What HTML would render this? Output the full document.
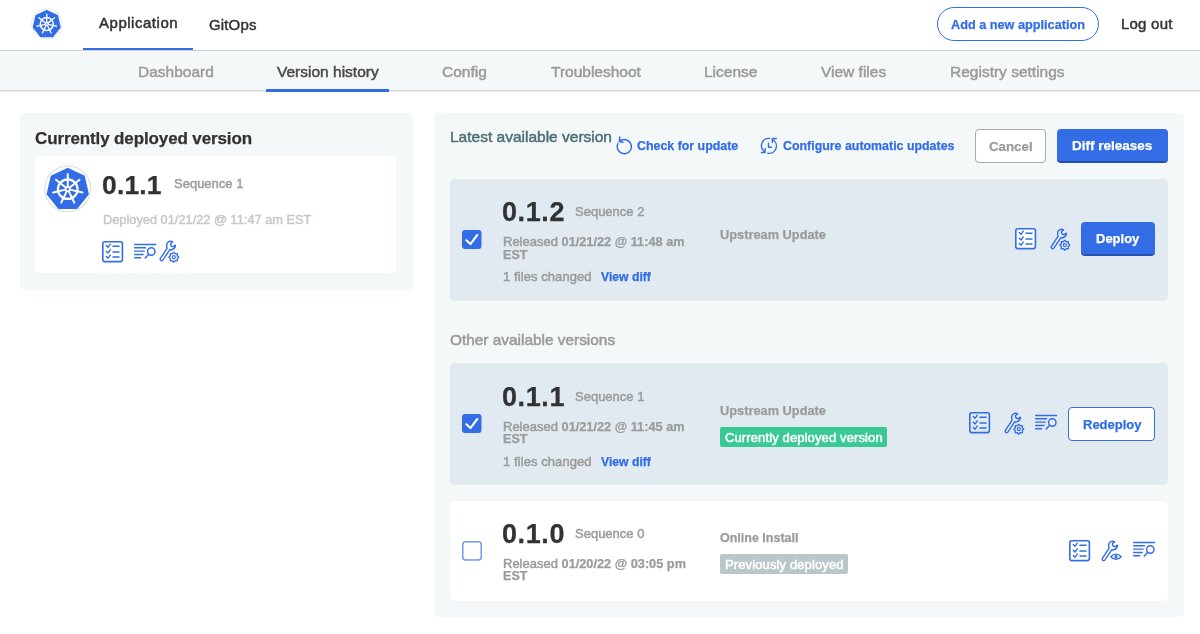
<!DOCTYPE html>
<html><head><meta charset="utf-8">
<style>
*{box-sizing:border-box;margin:0;padding:0}
html,body{width:1200px;height:634px;overflow:hidden;background:#fff;font-family:"Liberation Sans",sans-serif;-webkit-font-smoothing:antialiased}
.a{position:absolute;white-space:nowrap;line-height:1;will-change:transform}
svg{position:absolute;overflow:visible}
</style></head><body>
<div style="position:absolute;left:0px;top:0px;width:1200px;height:51px;background:#fff;border-bottom:1px solid #cfd2d3"></div>
<svg style="left:30.5px;top:8px" width="31.5" height="31.5" viewBox="0 0 48 48"><circle cx="24" cy="24" r="23.2" fill="#fff" stroke="#e2e2e2" stroke-width="1.3"/><polygon points="24.00,4.10 40.11,11.86 44.08,29.28 32.94,43.26 15.06,43.26 3.92,29.28 7.89,11.86" fill="#326de6" stroke="#326de6" stroke-width="2.5" stroke-linejoin="round"/><circle cx="24" cy="24.4" r="9.9" fill="none" stroke="#fff" stroke-width="2.3"/><g stroke="#fff" stroke-width="2.0" stroke-linecap="round"><line x1="24.00" y1="22.20" x2="24.00" y2="9.20"/><line x1="25.72" y1="23.03" x2="35.88" y2="14.92"/><line x1="26.14" y1="24.89" x2="38.82" y2="27.78"/><line x1="24.95" y1="26.38" x2="30.60" y2="38.09"/><line x1="23.05" y1="26.38" x2="17.40" y2="38.09"/><line x1="21.86" y1="24.89" x2="9.18" y2="27.78"/><line x1="22.28" y1="23.03" x2="12.12" y2="14.92"/></g><circle cx="24" cy="24.4" r="2.9" fill="#fff"/><circle cx="24" cy="24.4" r="1.2" fill="#326de6"/></svg>
<div class="a" style="left:99px;top:15.2px;font-size:15px;font-weight:400;color:#323232;-webkit-text-stroke:0.5px #323232;letter-spacing:0.52px">Application</div>
<div style="position:absolute;left:83px;top:48px;width:110px;height:2px;background:#326de6"></div>
<div class="a" style="left:209px;top:16.8px;font-size:15px;font-weight:400;color:#323232;-webkit-text-stroke:0.45px #323232;letter-spacing:0.15px">GitOps</div>
<div style="position:absolute;left:937px;top:7px;width:162px;height:34px;border:1px solid #326de6;border-radius:17px"></div>
<div class="a" style="left:951px;top:19px;font-size:12.7px;font-weight:700;color:#326de6;-webkit-text-stroke:0.25px #326de6;">Add a new application</div>
<div class="a" style="left:1121px;top:16.3px;font-size:15px;font-weight:400;color:#323232;-webkit-text-stroke:0.45px #323232;letter-spacing:0.22px">Log out</div>
<div style="position:absolute;left:0px;top:51px;width:1200px;height:40px;background:#f5f8f9;border-bottom:1px solid #d3d6d7;box-shadow:0 1px 0 #e6e9ea"></div>
<div class="a" style="left:138px;top:63.8px;font-size:15.5px;font-weight:400;color:#9b9b9b;-webkit-text-stroke:0.5px #9b9b9b;">Dashboard</div>
<div class="a" style="left:442px;top:63.8px;font-size:15.5px;font-weight:400;color:#9b9b9b;-webkit-text-stroke:0.5px #9b9b9b;">Config</div>
<div class="a" style="left:551px;top:63.8px;font-size:15.5px;font-weight:400;color:#9b9b9b;-webkit-text-stroke:0.5px #9b9b9b;">Troubleshoot</div>
<div class="a" style="left:704px;top:63.8px;font-size:15.5px;font-weight:400;color:#9b9b9b;-webkit-text-stroke:0.5px #9b9b9b;">License</div>
<div class="a" style="left:821px;top:63.8px;font-size:15.5px;font-weight:400;color:#9b9b9b;-webkit-text-stroke:0.5px #9b9b9b;">View files</div>
<div class="a" style="left:950px;top:63.8px;font-size:15.5px;font-weight:400;color:#9b9b9b;-webkit-text-stroke:0.5px #9b9b9b;">Registry settings</div>
<div class="a" style="left:277px;top:63.8px;font-size:15.5px;font-weight:400;color:#4a4a4a;-webkit-text-stroke:0.5px #4a4a4a;">Version history</div>
<div style="position:absolute;left:266px;top:89px;width:123px;height:2.6px;background:#326de6"></div>
<div style="position:absolute;left:19.6px;top:112.6px;width:393.2px;height:177.1px;background:#f5f8f9;border-radius:5px"></div>
<div class="a" style="left:35px;top:129.8px;font-size:17px;font-weight:700;color:#323232;-webkit-text-stroke:0.25px #323232;letter-spacing:-0.12px">Currently deployed version</div>
<div style="position:absolute;left:35.3px;top:156px;width:361px;height:117.4px;background:#fff;border-radius:5px"></div>
<svg style="left:44px;top:164.5px" width="47.5" height="47.5" viewBox="0 0 48 48"><circle cx="24" cy="24" r="23.2" fill="#fff" stroke="#e2e2e2" stroke-width="1.3"/><polygon points="24.00,4.10 40.11,11.86 44.08,29.28 32.94,43.26 15.06,43.26 3.92,29.28 7.89,11.86" fill="#326de6" stroke="#326de6" stroke-width="2.5" stroke-linejoin="round"/><circle cx="24" cy="24.4" r="9.9" fill="none" stroke="#fff" stroke-width="2.3"/><g stroke="#fff" stroke-width="2.0" stroke-linecap="round"><line x1="24.00" y1="22.20" x2="24.00" y2="9.20"/><line x1="25.72" y1="23.03" x2="35.88" y2="14.92"/><line x1="26.14" y1="24.89" x2="38.82" y2="27.78"/><line x1="24.95" y1="26.38" x2="30.60" y2="38.09"/><line x1="23.05" y1="26.38" x2="17.40" y2="38.09"/><line x1="21.86" y1="24.89" x2="9.18" y2="27.78"/><line x1="22.28" y1="23.03" x2="12.12" y2="14.92"/></g><circle cx="24" cy="24.4" r="2.9" fill="#fff"/><circle cx="24" cy="24.4" r="1.2" fill="#326de6"/></svg>
<div class="a" style="left:101.5px;top:171.8px;font-size:26.5px;font-weight:700;color:#323232;-webkit-text-stroke:0.25px #323232;letter-spacing:0.15px">0.1.1</div>
<div class="a" style="left:174px;top:177.3px;font-size:13px;font-weight:400;color:#9b9b9b;-webkit-text-stroke:0.45px #9b9b9b;">Sequence 1</div>
<div class="a" style="left:102.5px;top:213.7px;font-size:12.8px;font-weight:400;color:#c4c8ca;-webkit-text-stroke:0.45px #c4c8ca;">Deployed 01/21/22 @ 11:47 am EST</div>
<svg style="left:101.5px;top:240.5px" width="22" height="22" viewBox="0 0 22 22" fill="none" stroke="#326de6" stroke-linecap="round" stroke-linejoin="round"><rect x="0.8" y="0.8" width="19.6" height="19.8" rx="2" stroke-width="1.6" fill="none"/><path d="M4.3 4.6000000000000005 L6.0 6.300000000000001 L8.3 3.2" stroke-width="1.4"/><path d="M11.0 5.2 L17.0 5.2" stroke-width="1.5"/><path d="M4.3 10.3 L6.0 12.0 L8.3 8.9" stroke-width="1.4"/><path d="M11.0 10.9 L17.0 10.9" stroke-width="1.5"/><path d="M4.3 15.500000000000002 L6.0 17.200000000000003 L8.3 14.100000000000001" stroke-width="1.4"/><path d="M11.0 16.1 L17.0 16.1" stroke-width="1.5"/></svg>
<svg style="left:134px;top:243.8px" width="23" height="16" viewBox="0 0 23 16" fill="none" stroke="#326de6" stroke-width="1.45" stroke-linecap="round"><path d="M0.7 0.5 H21.6"/><path d="M0.7 3.8 H11.5"/><path d="M0.7 7.1 H10.2"/><path d="M0.7 10.4 H9.1"/><path d="M0.7 13.7 H6.6"/><circle cx="17.3" cy="7.5" r="3.7"/><path d="M14.6 10.3 L11.2 13.9" stroke-linecap="round"/></svg>
<svg style="left:155px;top:237px" width="26" height="28" viewBox="0 0 26 28" fill="none" stroke="#326de6" stroke-width="1.4" stroke-linejoin="round"><path d="M17.6 4.9 C15.8 3.6 12.9 4.2 12.0 6.6 C11.5 8.0 11.6 9.9 12.13 11.2 L5.43 21.4 A1.5 1.5 0 0 0 7.97 23.0 L14.67 12.8 C16.8 13.2 19.4 12.1 20.3 9.6 C20.5 9.0 20.5 8.6 20.4 8.2 L18.6 9.3 C17.4 9.9 15.9 9.3 15.6 8.0 C15.3 6.8 16.0 5.8 17.0 5.4 Z"/><polygon points="23.70,20.20 23.61,20.52 23.36,20.80 23.02,21.04 22.66,21.24 22.38,21.42 22.22,21.62 22.19,21.87 22.26,22.20 22.38,22.59 22.45,23.00 22.42,23.38 22.26,23.66 21.98,23.82 21.60,23.85 21.19,23.78 20.80,23.66 20.47,23.59 20.22,23.62 20.02,23.78 19.84,24.06 19.64,24.42 19.40,24.76 19.12,25.01 18.80,25.10 18.48,25.01 18.20,24.76 17.96,24.42 17.76,24.06 17.58,23.78 17.38,23.62 17.13,23.59 16.80,23.66 16.41,23.78 16.00,23.85 15.62,23.82 15.34,23.66 15.18,23.38 15.15,23.00 15.22,22.59 15.34,22.20 15.41,21.87 15.38,21.62 15.22,21.42 14.94,21.24 14.58,21.04 14.24,20.80 13.99,20.52 13.90,20.20 13.99,19.88 14.24,19.60 14.58,19.36 14.94,19.16 15.22,18.98 15.38,18.78 15.41,18.53 15.34,18.20 15.22,17.81 15.15,17.40 15.18,17.02 15.34,16.74 15.62,16.58 16.00,16.55 16.41,16.62 16.80,16.74 17.13,16.81 17.38,16.78 17.58,16.62 17.76,16.34 17.96,15.98 18.20,15.64 18.48,15.39 18.80,15.30 19.12,15.39 19.40,15.64 19.64,15.98 19.84,16.34 20.02,16.62 20.22,16.78 20.47,16.81 20.80,16.74 21.19,16.62 21.60,16.55 21.98,16.58 22.26,16.74 22.42,17.02 22.45,17.40 22.38,17.81 22.26,18.20 22.19,18.53 22.22,18.78 22.38,18.98 22.66,19.16 23.02,19.36 23.36,19.60 23.61,19.88" fill="none" stroke-width="1.3"/><circle cx="18.8" cy="20.2" r="1.5" stroke-width="1.2"/></svg>
<div style="position:absolute;left:434px;top:112.6px;width:750px;height:504px;background:#f5f8f9;border-radius:5px"></div>
<div class="a" style="left:450px;top:128.7px;font-size:15.5px;font-weight:400;color:#4f6f78;-webkit-text-stroke:0.5px #4f6f78;">Latest available version</div>
<svg style="left:612px;top:134px" width="24" height="24" viewBox="0 0 24 24" fill="none" stroke="#326de6" stroke-width="1.4" stroke-linecap="round" stroke-linejoin="round"><path d="M7.49 7.38 A7.1 7.1 0 1 1 5.92 9.49"/><path d="M7.8 3.4 L7.4 7.5 L10.9 8.3" stroke-width="1.6"/></svg>
<div class="a" style="left:637px;top:140.4px;font-size:12.4px;font-weight:700;color:#326de6;-webkit-text-stroke:0.25px #326de6;">Check for update</div>
<svg style="left:756px;top:134px" width="24" height="24" viewBox="0 0 24 24" fill="none" stroke="#326de6" stroke-width="1.4" stroke-linecap="round" stroke-linejoin="round"><path d="M13.6 4.4 A7.3 7.3 0 0 0 8.6 17.6"/><path d="M9.1 14.5 L9.1 18.5 L5.4 18.5"/><path d="M11.8 19.2 A7.3 7.3 0 0 0 16.6 5.6"/><path d="M16.4 8.6 L16.4 4.5 L20.4 4.5"/><path d="M12.5 9.3 L12.5 13.3 L15.4 13.3"/></svg>
<div class="a" style="left:782.5px;top:140.4px;font-size:12.4px;font-weight:700;color:#326de6;-webkit-text-stroke:0.25px #326de6;">Configure automatic updates</div>
<div style="position:absolute;left:975px;top:128.5px;width:71px;height:34px;background:#fff;border:1px solid #a8a8a8;border-radius:4px"></div>
<div class="a" style="left:988.5px;top:140px;font-size:13.3px;font-weight:700;color:#9b9b9b;-webkit-text-stroke:0.25px #9b9b9b;">Cancel</div>
<div style="position:absolute;left:1057px;top:128.5px;width:111px;height:34px;background:#326de6;border-bottom:2px solid #2451b3;border-radius:4px"></div>
<div class="a" style="left:1072px;top:139px;font-size:13.5px;font-weight:700;color:#fff;-webkit-text-stroke:0.25px #fff;">Diff releases</div>
<div style="position:absolute;left:450px;top:178.8px;width:718px;height:122px;background:#e0eaf0;border-radius:5px"></div>
<svg style="left:462.3px;top:230px" width="20" height="20" viewBox="0 0 20 20"><rect x="0" y="0" width="19.5" height="19.1" rx="3" fill="#326de6"/><path d="M4.3 10.3 L8.4 14.1 L15.3 5.0" fill="none" stroke="#fff" stroke-width="2.1" stroke-linecap="round" stroke-linejoin="round"/></svg>
<div class="a" style="left:502px;top:198.8px;font-size:27px;font-weight:700;color:#323232;-webkit-text-stroke:0.25px #323232;letter-spacing:0.6px">0.1.2</div>
<div class="a" style="left:575px;top:204.6px;font-size:13px;font-weight:400;color:#9b9b9b;-webkit-text-stroke:0.45px #9b9b9b;">Sequence 2</div>
<div class="a" style="left:502.5px;top:234.8px;font-size:13px;font-weight:400;color:#9b9b9b;"><span style="font-size:13px;-webkit-text-stroke:0.5px #9b9b9b">Released </span><b style="font-size:12.75px;-webkit-text-stroke:0.25px #9b9b9b">01/21/22 @ 11:48 am</b></div>
<div class="a" style="left:502.5px;top:248.7px;font-size:12.6px;font-weight:700;color:#9b9b9b;-webkit-text-stroke:0.25px #9b9b9b;">EST</div>
<div class="a" style="left:502.5px;top:269.8px;font-size:13px;font-weight:400;color:#9b9b9b;-webkit-text-stroke:0.5px #9b9b9b;letter-spacing:0.08px">1 files changed</div>
<div class="a" style="left:600.5px;top:270.8px;font-size:12.2px;font-weight:700;color:#326de6;-webkit-text-stroke:0.25px #326de6;">View diff</div>
<div class="a" style="left:720px;top:229px;font-size:12.8px;font-weight:700;color:#9b9b9b;-webkit-text-stroke:0.25px #9b9b9b;">Upstream Update</div>
<svg style="left:1014.5px;top:227.7px" width="22" height="22" viewBox="0 0 22 22" fill="none" stroke="#326de6" stroke-linecap="round" stroke-linejoin="round"><rect x="0.8" y="0.8" width="19.6" height="19.8" rx="2" stroke-width="1.6" fill="#fff"/><path d="M4.3 4.6000000000000005 L6.0 6.300000000000001 L8.3 3.2" stroke-width="1.4"/><path d="M11.0 5.2 L17.0 5.2" stroke-width="1.5"/><path d="M4.3 10.3 L6.0 12.0 L8.3 8.9" stroke-width="1.4"/><path d="M11.0 10.9 L17.0 10.9" stroke-width="1.5"/><path d="M4.3 15.500000000000002 L6.0 17.200000000000003 L8.3 14.100000000000001" stroke-width="1.4"/><path d="M11.0 16.1 L17.0 16.1" stroke-width="1.5"/></svg>
<svg style="left:1045.5px;top:225.2px" width="26" height="28" viewBox="0 0 26 28" fill="none" stroke="#326de6" stroke-width="1.4" stroke-linejoin="round"><path d="M17.6 4.9 C15.8 3.6 12.9 4.2 12.0 6.6 C11.5 8.0 11.6 9.9 12.13 11.2 L5.43 21.4 A1.5 1.5 0 0 0 7.97 23.0 L14.67 12.8 C16.8 13.2 19.4 12.1 20.3 9.6 C20.5 9.0 20.5 8.6 20.4 8.2 L18.6 9.3 C17.4 9.9 15.9 9.3 15.6 8.0 C15.3 6.8 16.0 5.8 17.0 5.4 Z"/><polygon points="23.70,20.20 23.61,20.52 23.36,20.80 23.02,21.04 22.66,21.24 22.38,21.42 22.22,21.62 22.19,21.87 22.26,22.20 22.38,22.59 22.45,23.00 22.42,23.38 22.26,23.66 21.98,23.82 21.60,23.85 21.19,23.78 20.80,23.66 20.47,23.59 20.22,23.62 20.02,23.78 19.84,24.06 19.64,24.42 19.40,24.76 19.12,25.01 18.80,25.10 18.48,25.01 18.20,24.76 17.96,24.42 17.76,24.06 17.58,23.78 17.38,23.62 17.13,23.59 16.80,23.66 16.41,23.78 16.00,23.85 15.62,23.82 15.34,23.66 15.18,23.38 15.15,23.00 15.22,22.59 15.34,22.20 15.41,21.87 15.38,21.62 15.22,21.42 14.94,21.24 14.58,21.04 14.24,20.80 13.99,20.52 13.90,20.20 13.99,19.88 14.24,19.60 14.58,19.36 14.94,19.16 15.22,18.98 15.38,18.78 15.41,18.53 15.34,18.20 15.22,17.81 15.15,17.40 15.18,17.02 15.34,16.74 15.62,16.58 16.00,16.55 16.41,16.62 16.80,16.74 17.13,16.81 17.38,16.78 17.58,16.62 17.76,16.34 17.96,15.98 18.20,15.64 18.48,15.39 18.80,15.30 19.12,15.39 19.40,15.64 19.64,15.98 19.84,16.34 20.02,16.62 20.22,16.78 20.47,16.81 20.80,16.74 21.19,16.62 21.60,16.55 21.98,16.58 22.26,16.74 22.42,17.02 22.45,17.40 22.38,17.81 22.26,18.20 22.19,18.53 22.22,18.78 22.38,18.98 22.66,19.16 23.02,19.36 23.36,19.60 23.61,19.88" fill="none" stroke-width="1.3"/><circle cx="18.8" cy="20.2" r="1.5" stroke-width="1.2"/></svg>
<div style="position:absolute;left:1081px;top:222.4px;width:74px;height:34px;background:#326de6;border-bottom:2px solid #2451b3;border-radius:4px"></div>
<div class="a" style="left:1096px;top:232.0px;font-size:13px;font-weight:700;color:#fff;-webkit-text-stroke:0.25px #fff;">Deploy</div>
<div class="a" style="left:450px;top:332.2px;font-size:15.4px;font-weight:400;color:#9b9b9b;-webkit-text-stroke:0.55px #9b9b9b;">Other available versions</div>
<div style="position:absolute;left:450px;top:363px;width:718px;height:122px;background:#e0eaf0;border-radius:5px"></div>
<svg style="left:462.3px;top:414px" width="20" height="20" viewBox="0 0 20 20"><rect x="0" y="0" width="19.5" height="19.1" rx="3" fill="#326de6"/><path d="M4.3 10.3 L8.4 14.1 L15.3 5.0" fill="none" stroke="#fff" stroke-width="2.1" stroke-linecap="round" stroke-linejoin="round"/></svg>
<div class="a" style="left:502px;top:383.5px;font-size:27px;font-weight:700;color:#323232;-webkit-text-stroke:0.25px #323232;letter-spacing:0.6px">0.1.1</div>
<div class="a" style="left:575px;top:389.8px;font-size:13px;font-weight:400;color:#9b9b9b;-webkit-text-stroke:0.45px #9b9b9b;">Sequence 1</div>
<div class="a" style="left:502.5px;top:419.7px;font-size:13px;font-weight:400;color:#9b9b9b;"><span style="font-size:13px;-webkit-text-stroke:0.5px #9b9b9b">Released </span><b style="font-size:12.75px;-webkit-text-stroke:0.25px #9b9b9b">01/21/22 @ 11:45 am</b></div>
<div class="a" style="left:502.5px;top:432.6px;font-size:12.6px;font-weight:700;color:#9b9b9b;-webkit-text-stroke:0.25px #9b9b9b;">EST</div>
<div class="a" style="left:502.5px;top:455.3px;font-size:13px;font-weight:400;color:#9b9b9b;-webkit-text-stroke:0.5px #9b9b9b;letter-spacing:0.08px">1 files changed</div>
<div class="a" style="left:600.5px;top:456.3px;font-size:12.2px;font-weight:700;color:#326de6;-webkit-text-stroke:0.25px #326de6;">View diff</div>
<div class="a" style="left:720px;top:404.8px;font-size:12.8px;font-weight:700;color:#9b9b9b;-webkit-text-stroke:0.25px #9b9b9b;">Upstream Update</div>
<div style="position:absolute;left:720px;top:427px;width:167px;height:20px;background:#38c995;border-radius:2px"></div>
<div class="a" style="left:724.5px;top:430.7px;font-size:13px;font-weight:400;color:#fff;-webkit-text-stroke:0.5px #fff;letter-spacing:0.12px">Currently deployed version</div>
<svg style="left:968.5px;top:412px" width="22" height="22" viewBox="0 0 22 22" fill="none" stroke="#326de6" stroke-linecap="round" stroke-linejoin="round"><rect x="0.8" y="0.8" width="19.6" height="19.8" rx="2" stroke-width="1.6" fill="none"/><path d="M4.3 4.6000000000000005 L6.0 6.300000000000001 L8.3 3.2" stroke-width="1.4"/><path d="M11.0 5.2 L17.0 5.2" stroke-width="1.5"/><path d="M4.3 10.3 L6.0 12.0 L8.3 8.9" stroke-width="1.4"/><path d="M11.0 10.9 L17.0 10.9" stroke-width="1.5"/><path d="M4.3 15.500000000000002 L6.0 17.200000000000003 L8.3 14.100000000000001" stroke-width="1.4"/><path d="M11.0 16.1 L17.0 16.1" stroke-width="1.5"/></svg>
<svg style="left:999.5px;top:409px" width="26" height="28" viewBox="0 0 26 28" fill="none" stroke="#326de6" stroke-width="1.4" stroke-linejoin="round"><path d="M17.6 4.9 C15.8 3.6 12.9 4.2 12.0 6.6 C11.5 8.0 11.6 9.9 12.13 11.2 L5.43 21.4 A1.5 1.5 0 0 0 7.97 23.0 L14.67 12.8 C16.8 13.2 19.4 12.1 20.3 9.6 C20.5 9.0 20.5 8.6 20.4 8.2 L18.6 9.3 C17.4 9.9 15.9 9.3 15.6 8.0 C15.3 6.8 16.0 5.8 17.0 5.4 Z"/><polygon points="23.70,20.20 23.61,20.52 23.36,20.80 23.02,21.04 22.66,21.24 22.38,21.42 22.22,21.62 22.19,21.87 22.26,22.20 22.38,22.59 22.45,23.00 22.42,23.38 22.26,23.66 21.98,23.82 21.60,23.85 21.19,23.78 20.80,23.66 20.47,23.59 20.22,23.62 20.02,23.78 19.84,24.06 19.64,24.42 19.40,24.76 19.12,25.01 18.80,25.10 18.48,25.01 18.20,24.76 17.96,24.42 17.76,24.06 17.58,23.78 17.38,23.62 17.13,23.59 16.80,23.66 16.41,23.78 16.00,23.85 15.62,23.82 15.34,23.66 15.18,23.38 15.15,23.00 15.22,22.59 15.34,22.20 15.41,21.87 15.38,21.62 15.22,21.42 14.94,21.24 14.58,21.04 14.24,20.80 13.99,20.52 13.90,20.20 13.99,19.88 14.24,19.60 14.58,19.36 14.94,19.16 15.22,18.98 15.38,18.78 15.41,18.53 15.34,18.20 15.22,17.81 15.15,17.40 15.18,17.02 15.34,16.74 15.62,16.58 16.00,16.55 16.41,16.62 16.80,16.74 17.13,16.81 17.38,16.78 17.58,16.62 17.76,16.34 17.96,15.98 18.20,15.64 18.48,15.39 18.80,15.30 19.12,15.39 19.40,15.64 19.64,15.98 19.84,16.34 20.02,16.62 20.22,16.78 20.47,16.81 20.80,16.74 21.19,16.62 21.60,16.55 21.98,16.58 22.26,16.74 22.42,17.02 22.45,17.40 22.38,17.81 22.26,18.20 22.19,18.53 22.22,18.78 22.38,18.98 22.66,19.16 23.02,19.36 23.36,19.60 23.61,19.88" fill="none" stroke-width="1.3"/><circle cx="18.8" cy="20.2" r="1.5" stroke-width="1.2"/></svg>
<svg style="left:1035.3px;top:414.6px" width="23" height="16" viewBox="0 0 23 16" fill="none" stroke="#326de6" stroke-width="1.45" stroke-linecap="round"><path d="M0.7 0.5 H21.6"/><path d="M0.7 3.8 H11.5"/><path d="M0.7 7.1 H10.2"/><path d="M0.7 10.4 H9.1"/><path d="M0.7 13.7 H6.6"/><circle cx="17.3" cy="7.5" r="3.7"/><path d="M14.6 10.3 L11.2 13.9" stroke-linecap="round"/></svg>
<div style="position:absolute;left:1068px;top:407px;width:87px;height:33.6px;background:#fff;border:1px solid #326de6;border-radius:4px"></div>
<div class="a" style="left:1082.5px;top:417.8px;font-size:13px;font-weight:700;color:#326de6;-webkit-text-stroke:0.25px #326de6;">Redeploy</div>
<div style="position:absolute;left:450px;top:501px;width:718px;height:100px;background:#fff;border-radius:5px"></div>
<svg style="left:462px;top:541px" width="20" height="20" viewBox="0 0 20 20"><rect x="0.75" y="0.75" width="18.5" height="18.3" rx="3" fill="#fff" stroke="#6f9cf0" stroke-width="1.5"/></svg>
<div class="a" style="left:502px;top:521px;font-size:27px;font-weight:700;color:#323232;-webkit-text-stroke:0.25px #323232;letter-spacing:0.6px">0.1.0</div>
<div class="a" style="left:575px;top:527.1px;font-size:13px;font-weight:400;color:#9b9b9b;-webkit-text-stroke:0.45px #9b9b9b;">Sequence 0</div>
<div class="a" style="left:502.5px;top:557px;font-size:13px;font-weight:400;color:#9b9b9b;"><span style="font-size:13px;-webkit-text-stroke:0.5px #9b9b9b">Released </span><b style="font-size:12.75px;-webkit-text-stroke:0.25px #9b9b9b">01/20/22 @ 03:05 pm</b></div>
<div class="a" style="left:502.5px;top:570px;font-size:12.6px;font-weight:700;color:#9b9b9b;-webkit-text-stroke:0.25px #9b9b9b;">EST</div>
<div class="a" style="left:720px;top:531.9px;font-size:12.5px;font-weight:700;color:#9b9b9b;-webkit-text-stroke:0.25px #9b9b9b;">Online Install</div>
<div style="position:absolute;left:720px;top:554px;width:127.5px;height:20px;background:#bac6ca;border-radius:2px"></div>
<div class="a" style="left:724.5px;top:558.4px;font-size:13px;font-weight:400;color:#fff;-webkit-text-stroke:0.5px #fff;letter-spacing:0.12px">Previously deployed</div>
<svg style="left:1068.5px;top:540px" width="22" height="22" viewBox="0 0 22 22" fill="none" stroke="#326de6" stroke-linecap="round" stroke-linejoin="round"><rect x="0.8" y="0.8" width="19.6" height="19.8" rx="2" stroke-width="1.6" fill="none"/><path d="M4.3 4.6000000000000005 L6.0 6.300000000000001 L8.3 3.2" stroke-width="1.4"/><path d="M11.0 5.2 L17.0 5.2" stroke-width="1.5"/><path d="M4.3 10.3 L6.0 12.0 L8.3 8.9" stroke-width="1.4"/><path d="M11.0 10.9 L17.0 10.9" stroke-width="1.5"/><path d="M4.3 15.500000000000002 L6.0 17.200000000000003 L8.3 14.100000000000001" stroke-width="1.4"/><path d="M11.0 16.1 L17.0 16.1" stroke-width="1.5"/></svg>
<svg style="left:1097px;top:537px" width="26" height="28" viewBox="0 0 26 28" fill="none" stroke="#326de6" stroke-width="1.4" stroke-linejoin="round"><path d="M17.6 4.9 C15.8 3.6 12.9 4.2 12.0 6.6 C11.5 8.0 11.6 9.9 12.13 11.2 L5.43 21.4 A1.5 1.5 0 0 0 7.97 23.0 L14.67 12.8 C16.8 13.2 19.4 12.1 20.3 9.6 C20.5 9.0 20.5 8.6 20.4 8.2 L18.6 9.3 C17.4 9.9 15.9 9.3 15.6 8.0 C15.3 6.8 16.0 5.8 17.0 5.4 Z"/><path d="M13.9 19.7 C16.5 16.3 21.5 16.3 24.1 19.7 C21.5 23.1 16.5 23.1 13.9 19.7 Z" fill="#fff"/><circle cx="19" cy="19.7" r="1.6" fill="#326de6" stroke="none"/></svg>
<svg style="left:1133px;top:542px" width="23" height="16" viewBox="0 0 23 16" fill="none" stroke="#326de6" stroke-width="1.45" stroke-linecap="round"><path d="M0.7 0.5 H21.6"/><path d="M0.7 3.8 H11.5"/><path d="M0.7 7.1 H10.2"/><path d="M0.7 10.4 H9.1"/><path d="M0.7 13.7 H6.6"/><circle cx="17.3" cy="7.5" r="3.7"/><path d="M14.6 10.3 L11.2 13.9" stroke-linecap="round"/></svg>
</body></html>
